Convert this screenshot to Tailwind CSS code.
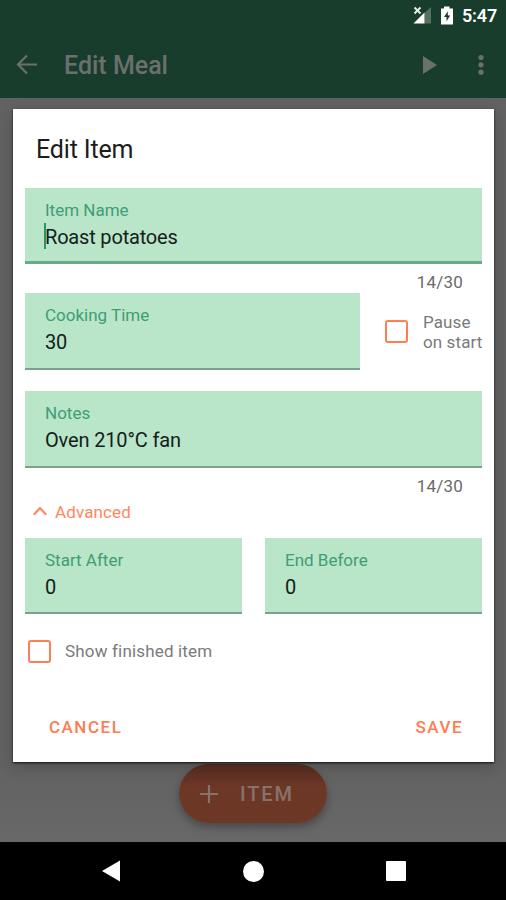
<!DOCTYPE html>
<html lang="en">
<head>
<meta charset="utf-8">
<title>Edit Meal</title>
<script src="https://cdn.jsdelivr.net/npm/@tailwindcss/browser@4"></script>
</head>
<body class="bg-black">
<div class="relative flex h-[900px] w-[506px] flex-col overflow-hidden bg-[#626262] font-[Roboto,sans-serif]">
  <header class="h-[98px] shrink-0 bg-[#183d2c] shadow-[0_1px_1px_rgba(24,61,44,0.5)]">
    <div class="flex h-8 items-center justify-end pr-[9px] text-white">
      <svg class="h-[20px] w-[20px]" viewBox="0 0 20 20"><path d="M19 1v16.500h-6.500V7z" fill="#54705f"/><path d="M12.500 6.500v11H1.500z" fill="#fff"/><path d="m2.500 1.500 6 6m0-6-6 6" stroke="#e8eeea" stroke-width="1.900"/></svg>
      <svg class="ml-[8px] h-[20px] w-[14px]" viewBox="0 0 14 20"><path d="M4 .5h5.500v2H13V18.500H1V2.500h3z" fill="#fff"/><path d="M7.800 5.200 4 11h2.500v4.200L10.200 9.600H7.800z" fill="#183d2c"/></svg>
      <span class="ml-[8px] text-[18px] leading-8 font-semibold tracking-[-0.200px]">5:47</span>
    </div>
    <div class="flex h-[66px] items-center pl-[16px] text-[#6c706d]">
      <svg class="h-[22px] w-[22px]" viewBox="0 0 22 22" fill="none" stroke="currentColor" stroke-width="2.200"><path d="M21 10.500H2.500M11 1.500l-9 9 9 9"/></svg>
      <h1 class="ml-[26px] pt-[2px] text-[25px] font-medium">Edit Meal</h1>
      <svg class="ml-auto h-[18px] w-[14px]" viewBox="0 0 14 18" fill="currentColor"><path d="M0 0v18l14-9z"/></svg>
      <svg class="mr-[22px] ml-[41px] h-[22px] w-[6px]" viewBox="0 0 6 22" fill="currentColor"><circle cx="3" cy="3.500" r="2.600"/><circle cx="3" cy="10.800" r="2.600"/><circle cx="3" cy="18.200" r="2.600"/></svg>
    </div>
  </header>

  <main class="flex flex-1 items-end justify-center bg-linear-to-b from-[#626262] from-90% to-[#686868] pb-[19px]">
    <div class="flex h-[59px] w-[148px] items-center rounded-full bg-linear-to-b from-[#572c20] to-[#6d3726] to-40% pl-[21px] text-[#85736c] shadow-[0_4px_8px_rgba(0,0,0,0.3)]">
      <svg class="h-[18px] w-[18px]" viewBox="0 0 18 18" fill="none" stroke="currentColor" stroke-width="2.200"><path d="M9 0v18M0 9h18"/></svg>
      <span class="ml-[22px] text-[20px] font-medium tracking-[1.900px]">ITEM</span>
    </div>
  </main>

  <nav class="flex h-[58px] shrink-0 items-center bg-black pl-[102px]">
    <svg class="h-[22px] w-[18px]" viewBox="0 0 18 22" fill="#fff"><path d="M18 .5v21L0 11z"/></svg>
    <div class="ml-[123px] size-[21px] rounded-full bg-white"></div>
    <div class="ml-[122px] size-[20px] rounded-[1px] bg-white"></div>
  </nav>

  <section class="absolute top-[109px] left-[13px] flex h-[653px] w-[481px] flex-col bg-white px-[12px] shadow-[0_1px_2px_rgba(0,0,0,0.8),0_4px_14px_rgba(0,0,0,0.2)]">
    <h2 class="flex h-[79px] items-center pt-[2px] pl-[11px] text-[25px] tracking-[-0.150px] text-[#1c1c1c]">Edit Item</h2>

    <div class="flex h-[76px] shrink-0 flex-col border-b-[3px] border-[#6aa98a] bg-[#b9e5c9] pt-[12px] pl-[20px]">
      <span class="text-[17px] leading-[20px] text-[#3e9e75]">Item Name</span>
      <span class="relative mt-[4px] text-[20px] leading-[26px] tracking-[-0.180px] text-[#14201a]">Roast potatoes<i class="absolute -top-px left-[-1px] h-[26px] w-[2px] bg-[#2e9468]"></i></span>
    </div>
    <p class="h-[29px] pt-[8px] pr-[19px] text-right text-[17px] leading-[20px] tracking-[0.200px] text-[#6a6a6a]">14/30</p>

    <div class="flex h-[77px] items-start">
      <div class="flex h-[77px] w-[335px] shrink-0 flex-col border-b-[2px] border-[#7f9f8c] bg-[#b9e5c9] pt-[12px] pl-[20px]">
        <span class="text-[17px] leading-[20px] text-[#3e9e75]">Cooking Time</span>
        <span class="mt-[4px] text-[20px] leading-[26px] tracking-[-0.150px] text-[#14201a]">30</span>
      </div>
      <span class="mt-[27px] ml-[25px] size-[23px] shrink-0 rounded-[3px] border-2 border-[#ff7f54]"></span>
      <span class="mt-[19px] ml-[15px] shrink-0 text-[17px] leading-[20px] tracking-[0.100px] whitespace-nowrap text-[#7a7a7a]">Pause<br>on start</span>
    </div>

    <div class="mt-[21px] flex h-[77px] shrink-0 flex-col border-b-[2px] border-[#7f9f8c] bg-[#b9e5c9] pt-[12px] pl-[20px]">
      <span class="text-[17px] leading-[20px] text-[#3e9e75]">Notes</span>
      <span class="mt-[4px] text-[20px] leading-[26px] tracking-[-0.150px] text-[#14201a]">Oven 210°C fan</span>
    </div>
    <p class="h-[29px] pt-[8px] pr-[19px] text-right text-[17px] leading-[20px] tracking-[0.200px] text-[#6a6a6a]">14/30</p>

    <div class="flex h-[41px] items-start pt-[5px] pl-[8px] text-[#ff8860]">
      <svg class="mt-[4px] h-[10px] w-[14px]" viewBox="0 0 14 10" fill="none" stroke="currentColor" stroke-width="2.200"><path d="m.8 8.700 6.200-6.600 6.200 6.600"/></svg>
      <span class="ml-[8px] text-[17px] leading-[20px] tracking-[0.130px]">Advanced</span>
    </div>

    <div class="grid grid-cols-2 gap-[23px]">
      <div class="flex h-[76px] flex-col border-b-[2px] border-[#7f9f8c] bg-[#b9e5c9] pt-[12px] pl-[20px]">
        <span class="text-[17px] leading-[20px] text-[#3e9e75]">Start After</span>
        <span class="mt-[4px] text-[20px] leading-[26px] text-[#14201a]">0</span>
      </div>
      <div class="flex h-[76px] flex-col border-b-[2px] border-[#7f9f8c] bg-[#b9e5c9] pt-[12px] pl-[20px]">
        <span class="text-[17px] leading-[20px] text-[#3e9e75]">End Before</span>
        <span class="mt-[4px] text-[20px] leading-[26px] text-[#14201a]">0</span>
      </div>
    </div>

    <div class="mt-[26px] flex h-[23px] items-center pl-[3px]">
      <span class="size-[23px] rounded-[3px] border-2 border-[#ff7f54]"></span>
      <span class="ml-[14px] pt-px text-[17px] tracking-[0.170px] text-[#7a7a7a]">Show finished item</span>
    </div>

    <div class="mt-auto flex items-center justify-between pr-[19px] pb-[24px] pl-[24px] text-[17px] leading-[22px] font-medium tracking-[1.500px] text-[#ff7c50]">
      <span>CANCEL</span><span>SAVE</span>
    </div>
  </section>
</div>
</body>
</html>
